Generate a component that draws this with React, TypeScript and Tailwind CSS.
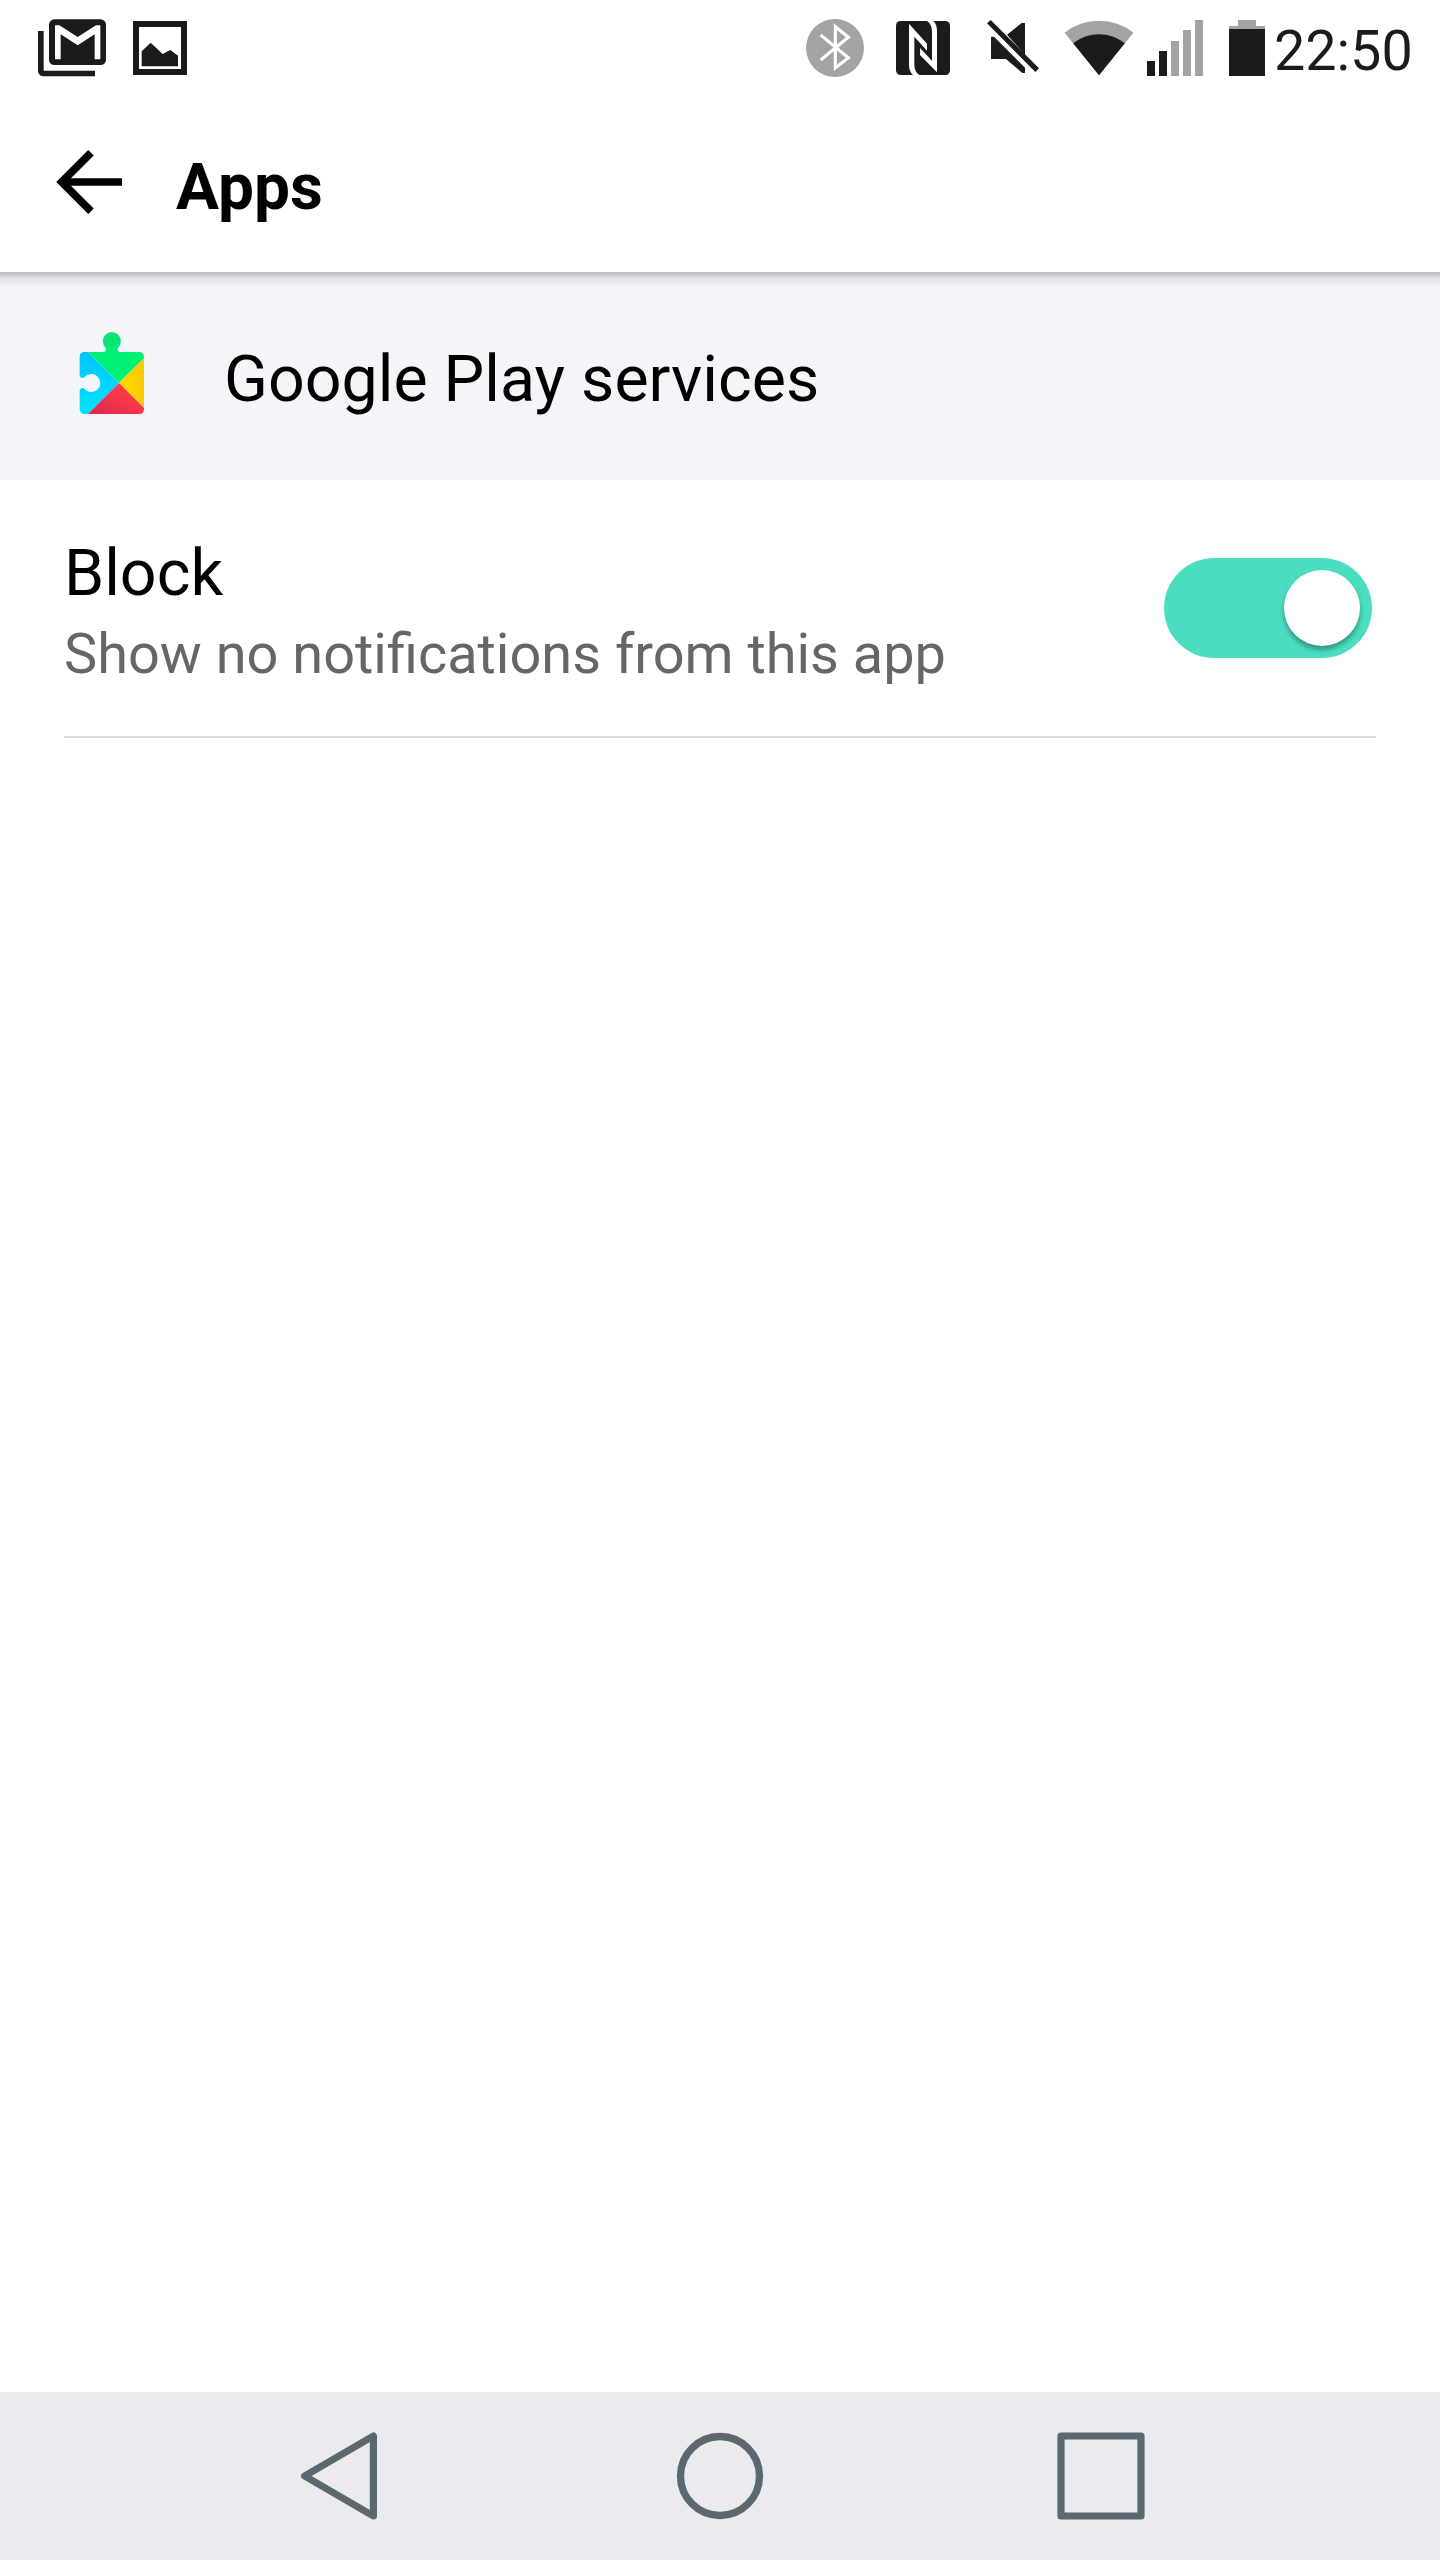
import { useState } from "react"

function StatusBar() {
  return (
    <div className="flex h-24 shrink-0 items-start pt-[19px] pl-[38px] text-[#1b1b1b]">
      <svg viewBox="54 57 204 174" className="h-[58px] w-[68px]" fill="currentColor">
        <path d="M54 93h17v119h154v17H70a16 16 0 0 1-16-16z" />
        <rect x="87" y="58" width="171" height="137" rx="16" />
        <path
          fill="#fff"
          d="M105 178V76h13l55 35 55-35h13v102h-17v-75l-51 33-51-33v75z"
        />
      </svg>
      <svg
        viewBox="339 57 162 174"
        className="ml-[27px] h-[58px] w-[54px]"
        fill="currentColor"
      >
        <path fillRule="evenodd" d="M339 63h162v162H339zM357 81v126h126V81z" />
        <path d="M365 199v-45l27-26 36 34 23-12 23 17v32z" />
      </svg>

      <svg viewBox="48 57 174 174" className="ml-[619px] h-[58px] w-[58px]">
        <circle cx="135" cy="144" r="87" fill="#a3a3a3" />
        <path
          d="M92 105l83 68-39 31V80l39 32-83 68"
          fill="none"
          stroke="#fff"
          strokeWidth="9.5"
        />
      </svg>
      <svg viewBox="318 57 162 174" className="ml-8 h-[58px] w-[54px]">
        <rect x="318" y="63" width="162" height="162" rx="14" fill="currentColor" />
        <path
          fill="#fff"
          d="M357 71l54 60v21l-38-42v82c0 16 5 27 15 33h-19c-8-8-12-17-12-30z"
        />
        <path
          fill="#fff"
          d="M441 217l-51-52v-21l36 38V96c0-16-5-27-15-33h19c8 8 11 17 11 30z"
        />
      </svg>
      <svg
        viewBox="591 57 156 174"
        className="ml-[37px] h-[58px] w-[52px]"
        fill="currentColor"
      >
        <path d="M602 60l145 145-11 11L591 70z" />
        <path d="M651 104l44-35h10v96z" />
        <path d="M603 110h9l93 93v16h-8l-49-42h-45z" />
      </svg>
      <svg viewBox="72 57 210 174" className="ml-[25px] h-[58px] w-[70px]">
        <path fill="#a3a3a3" d="M177 226L74 98a165 165 0 0 1 206 0z" />
        <path fill="currentColor" d="M177 226L99.500 130a124 124 0 0 1 155 0z" />
      </svg>
      <svg viewBox="321 57 168 174" className="ml-[13px] h-[58px] w-14">
        <path fill="currentColor" d="M321 183h24v45h-24zM357 153h24v75h-24z" />
        <path fill="#a3a3a3" d="M393 123h24v105h-24zM429 90h24v138h-24zM465 60h24v168h-24z" />
      </svg>
      <svg viewBox="57 57 108 174" className="ml-[26px] h-[58px] w-9">
        <path fill="#a3a3a3" d="M84 60h54v18h27v9H57v-9h27z" />
        <path fill="currentColor" d="M57 87h108v141H57z" />
      </svg>
      <span className="-mt-px ml-[9px] text-[55.7px] leading-[66px]">22:50</span>
    </div>
  )
}

function PlayServicesIcon() {
  return (
    <svg viewBox="57 63 198 252" className="h-[84px] w-[66px]">
      <defs>
        <linearGradient id="blue" x1="0" y1="0" x2="0" y2="1">
          <stop offset="0" stopColor="#00c3ff" />
          <stop offset="1" stopColor="#00e4ff" />
        </linearGradient>
        <linearGradient id="green" x1="0" y1="0" x2="0" y2="1">
          <stop offset="0" stopColor="#0be077" />
          <stop offset="0.5" stopColor="#00f076" />
        </linearGradient>
        <linearGradient id="red" x1="1" y1="0" x2="0" y2="1">
          <stop offset="0.3" stopColor="#ff3a44" />
          <stop offset="1" stopColor="#d8275a" />
        </linearGradient>
        <linearGradient id="yellow" x1="0" y1="0" x2="1" y2="0">
          <stop offset="0" stopColor="#ffd900" />
          <stop offset="1" stopColor="#ffc900" />
        </linearGradient>
      </defs>
      <path
        fill="url(#blue)"
        d="M84 126H73a14 14 0 0 0-14 14v56c0 7 9 11 14 6a27 27 0 1 1 0 34c-5-5-14-1-14 6v56a14 14 0 0 0 14 14h11l93-93z"
      />
      <path
        fill="url(#green)"
        d="M84 126h46c8 0 10-8 6-14a27 27 0 1 1 39 0c-4 6-2 14 6 14h57a14 14 0 0 1 14 14v5l-75 74z"
      />
      <path fill="url(#yellow)" d="M252 145v149l-75-75z" />
      <path fill="url(#red)" d="M84 312l93-93 75 75v4a14 14 0 0 1-14 14z" />
    </svg>
  )
}

function Switch({ on, onChange }: { on: boolean; onChange: () => void }) {
  return (
    <button
      role="switch"
      aria-checked={on}
      aria-label="Block"
      onClick={onChange}
      className={
        on
          ? "mt-[22px] flex h-[100px] w-[208px] justify-end rounded-full bg-[#4bddc0] p-3"
          : "mt-[22px] flex h-[100px] w-[208px] justify-start rounded-full bg-gray-300 p-3"
      }
    >
      <span className="size-[76px] rounded-full bg-white shadow-[0_4px_5px_rgba(0,0,0,0.32)]" />
    </button>
  )
}

function NavBar() {
  return (
    <nav className="flex h-[168px] items-center bg-[#e9ebee] pl-[300px] text-[#5b6870]">
      <button aria-label="Back">
        <svg
          viewBox="0 0 78 88"
          className="h-[88px] w-[78px]"
          fill="none"
          stroke="currentColor"
          strokeWidth="7.2"
          strokeLinejoin="round"
        >
          <path d="M4.600 44L73.400 4v80z" />
        </svg>
      </button>
      <button aria-label="Home" className="ml-[298px]">
        <svg
          viewBox="0 0 88 88"
          className="size-[88px]"
          fill="none"
          stroke="currentColor"
          strokeWidth="7.3"
        >
          <circle cx="44" cy="44" r="39.500" />
        </svg>
      </button>
      <button aria-label="Recent apps" className="ml-[293px]">
        <svg
          viewBox="0 0 88 88"
          className="size-[88px]"
          fill="none"
          stroke="currentColor"
          strokeWidth="7.2"
          strokeLinejoin="round"
        >
          <path d="M4 4h80v80H4z" />
        </svg>
      </button>
    </nav>
  )
}

export default function App() {
  const [blocked, setBlocked] = useState(true)

  return (
    <div className="flex h-[2560px] w-[1440px] flex-col bg-white font-['Roboto',sans-serif] text-black">
      <StatusBar />

      <header className="flex h-44 shrink-0 items-start pl-14">
        <button aria-label="Back" className="mt-[54px]">
          <svg
            viewBox="78 60 198 192"
            className="h-16 w-[66px]"
            fill="none"
            stroke="currentColor"
            strokeWidth="23"
          >
            <path d="M183 68l-88 88 88 88M95 156h181" />
          </svg>
        </button>
        <h1 className="mt-[54px] ml-[54px] text-[64px] leading-[75px] font-bold">
          Apps
        </h1>
      </header>

      <section className="h-52 shrink-0 bg-[#f4f5f8]">
        <div className="h-4 bg-linear-to-b from-black/25 via-black/7 via-40% to-transparent" />
        <div className="flex items-start pl-[79px]">
          <div className="mt-[43px]">
            <PlayServicesIcon />
          </div>
          <h2 className="mt-[54px] ml-[79px] text-[64.5px] leading-[75px]">
            Google Play services
          </h2>
        </div>
      </section>

      <main className="flex-1 px-16">
        <div className="flex h-[258px] items-start justify-between border-b-2 border-[#d9d9d9] pt-14 pr-1">
          <div>
            <div className="text-[64.5px] leading-[75px]">Block</div>
            <p className="mt-2.5 text-[55.9px] leading-[66px] text-[#666]">
              Show no notifications from this app
            </p>
          </div>
          <Switch on={blocked} onChange={() => setBlocked(!blocked)} />
        </div>
      </main>

      <NavBar />
    </div>
  )
}
